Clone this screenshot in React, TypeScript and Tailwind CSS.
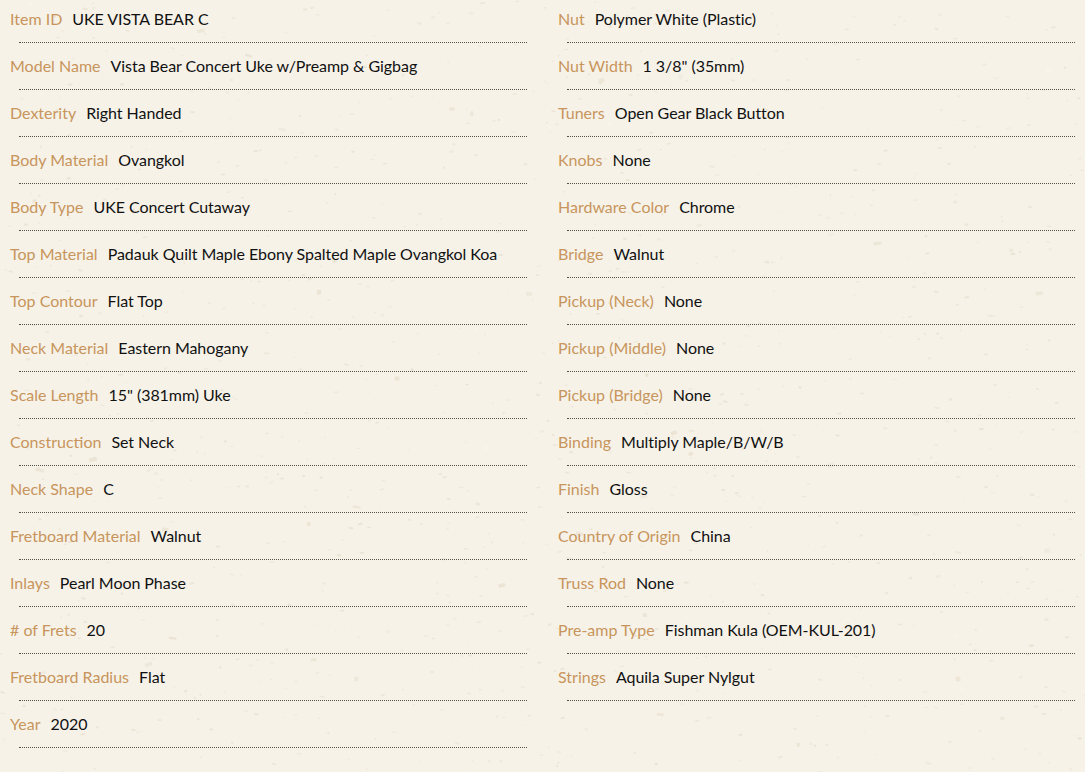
const leftSpecs = [
  ["Item ID", "UKE VISTA BEAR C"],
  ["Model Name", "Vista Bear Concert Uke w/Preamp & Gigbag"],
  ["Dexterity", "Right Handed"],
  ["Body Material", "Ovangkol"],
  ["Body Type", "UKE Concert Cutaway"],
  ["Top Material", "Padauk Quilt Maple Ebony Spalted Maple Ovangkol Koa"],
  ["Top Contour", "Flat Top"],
  ["Neck Material", "Eastern Mahogany"],
  ["Scale Length", '15" (381mm) Uke'],
  ["Construction", "Set Neck"],
  ["Neck Shape", "C"],
  ["Fretboard Material", "Walnut"],
  ["Inlays", "Pearl Moon Phase"],
  ["# of Frets", "20"],
  ["Fretboard Radius", "Flat"],
  ["Year", "2020"],
];

const rightSpecs = [
  ["Nut", "Polymer White (Plastic)"],
  ["Nut Width", '1 3/8" (35mm)'],
  ["Tuners", "Open Gear Black Button"],
  ["Knobs", "None"],
  ["Hardware Color", "Chrome"],
  ["Bridge", "Walnut"],
  ["Pickup (Neck)", "None"],
  ["Pickup (Middle)", "None"],
  ["Pickup (Bridge)", "None"],
  ["Binding", "Multiply Maple/B/W/B"],
  ["Finish", "Gloss"],
  ["Country of Origin", "China"],
  ["Truss Rod", "None"],
  ["Pre-amp Type", "Fishman Kula (OEM-KUL-201)"],
  ["Strings", "Aquila Super Nylgut"],
];

// paper grain behind the table, seeded so every render is the same
function PaperTexture() {
  let seed = 7;
  const rand = () => {
    seed = (seed * 16807) % 2147483647;
    return seed / 2147483647;
  };
  const flecks = Array.from({ length: 1300 }, (_, i) => {
    const big = rand() > 0.95;
    const light = rand() > 0.85;
    return {
      id: i,
      x: rand() * 1085,
      y: rand() * 772,
      w: big ? 3 + rand() * 5 : 1 + rand() * 4,
      h: big ? 2 + rand() * 3 : 1 + rand() * 1.2,
      r: rand() * 40 - 20,
      o: light ? 0.4 : 0.35 + rand() * 0.5,
      c: light ? "#faf7f0" : "#e9e1d0",
    };
  });
  return (
    <svg className="absolute inset-0 h-full w-full" viewBox="0 0 1085 772">
      {flecks.map((f) => (
        <rect
          key={f.id}
          x={f.x}
          y={f.y}
          width={f.w}
          height={f.h}
          rx={0.8}
          fill={f.c}
          opacity={f.o}
          transform={`rotate(${f.r} ${f.x} ${f.y})`}
        />
      ))}
    </svg>
  );
}

function SpecColumn({ specs }: { specs: string[][] }) {
  return (
    <ul>
      {specs.map(([label, value]) => (
        <li key={label} className="mb-[11px]">
          <div className="flex h-6 gap-[10px] pl-[10px] leading-6">
            <span className="text-[#c8955c]">{label}</span>
            <span className="tracking-[-0.05px] text-[#111111]">{value}</span>
          </div>
          <div className="mt-[11px] ml-[19px] border-b border-dotted border-[#55524c]" />
        </li>
      ))}
    </ul>
  );
}

export default function App() {
  return (
    <div className="relative h-[772px] w-[1085px] overflow-hidden bg-[#f6f2e8] font-['Lato',sans-serif] text-base">
      <PaperTexture />
      <div className="relative grid grid-cols-[527px_527px] gap-x-[21px] pt-[7px]">
        <SpecColumn specs={leftSpecs} />
        <SpecColumn specs={rightSpecs} />
      </div>
    </div>
  );
}
